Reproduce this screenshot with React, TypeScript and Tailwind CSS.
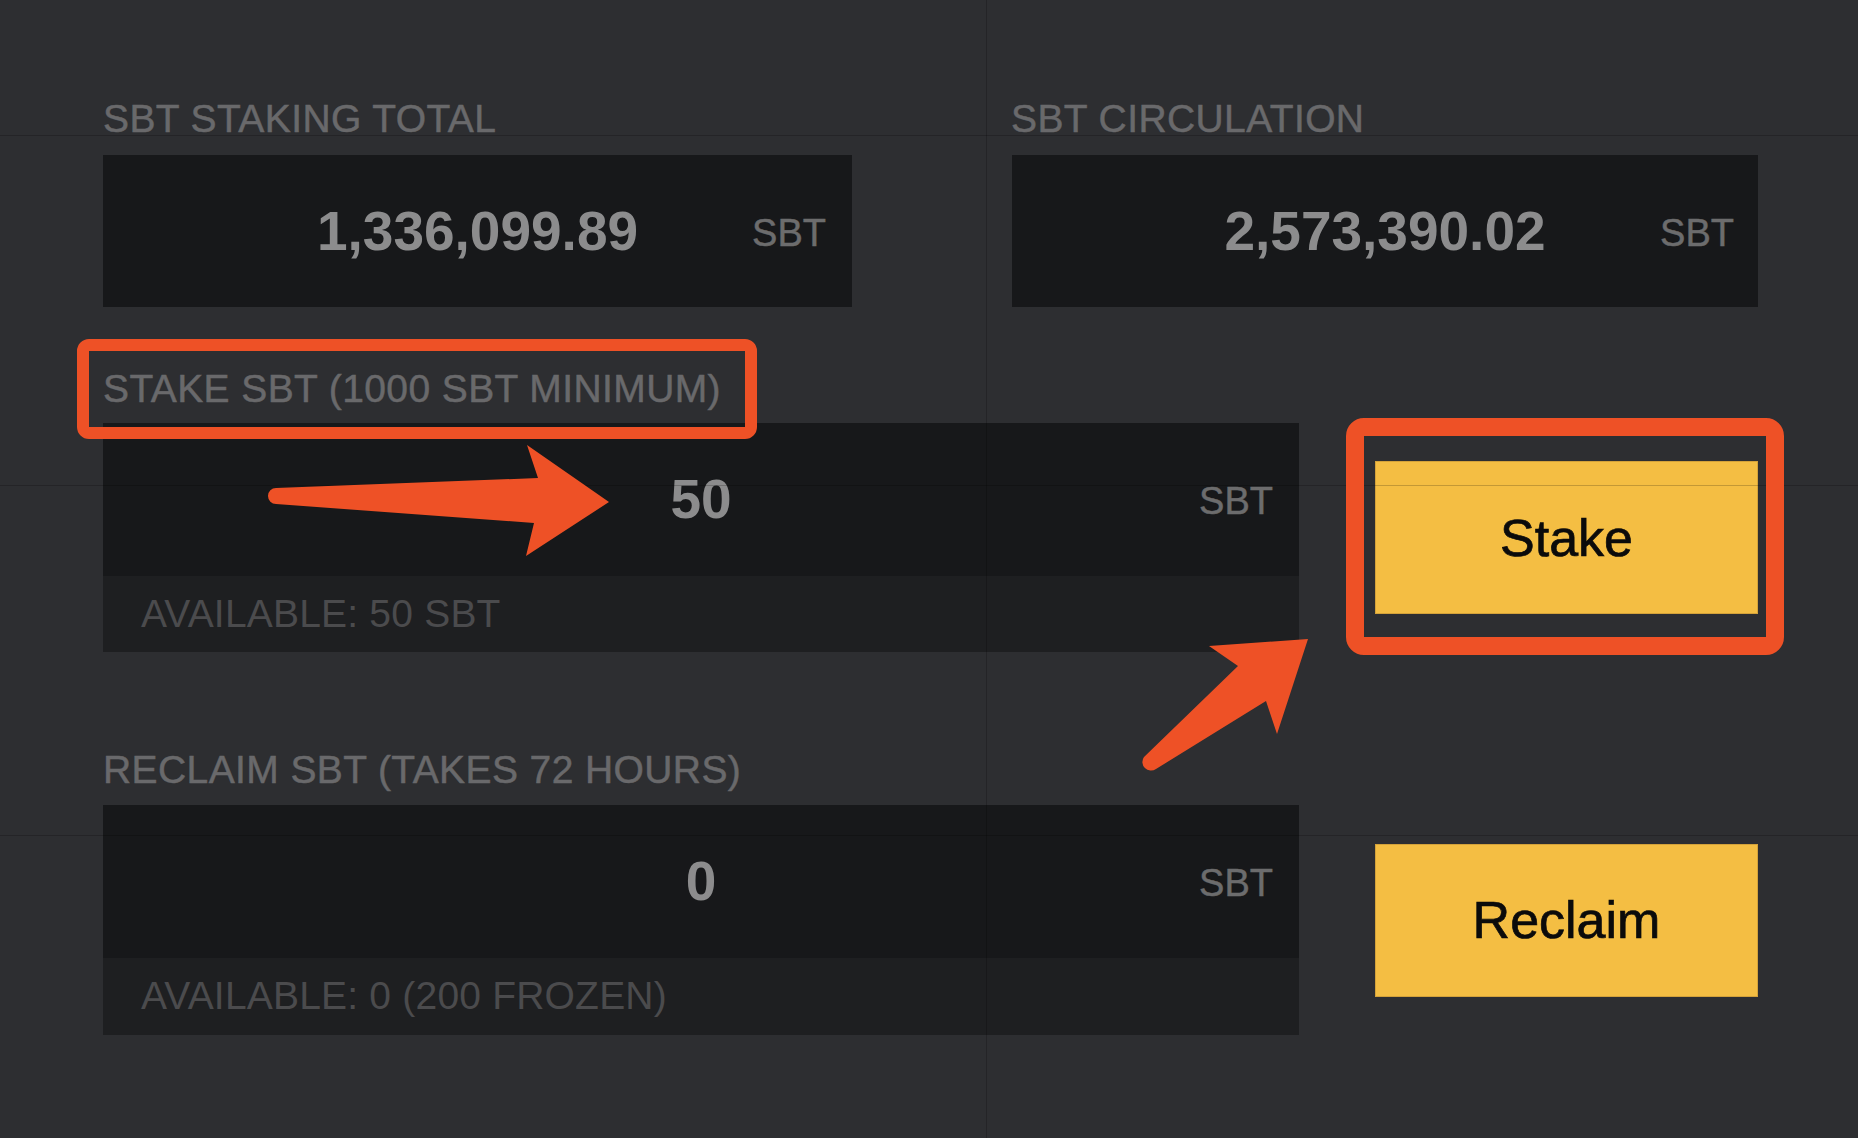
import React from 'react';

const FONT = "font-['Liberation_Sans',Arial,sans-serif]";

const Label: React.FC<{ text: string; className?: string }> = ({ text, className = '' }) => (
  <div
    className={`h-[39px] text-[39px] leading-[39px] tracking-[0.4px] text-[#69696b] whitespace-nowrap [-webkit-text-stroke:0.5px_currentColor] ${className}`}
  >
    {text}
  </div>
);

const AmountRow: React.FC<{ value: string; height: string; unitPad: string }> = ({ value, height, unitPad }) => (
  <div className={`grid grid-cols-[1fr_auto_1fr] items-center bg-[#17181a] ${height}`}>
    <div />
    <span className="text-[55px] font-bold text-[#8c8c8d]">{value}</span>
    <span
      className={`justify-self-end pt-[4px] text-[38px] text-[#6c6c6d] [-webkit-text-stroke:0.5px_currentColor] ${unitPad}`}
    >
      SBT
    </span>
  </div>
);

const ActionButton: React.FC<{ text: string }> = ({ text }) => (
  <button className="ml-[76px] flex h-[153px] w-[383px] items-center justify-center border border-[#d4a23a] bg-[#f4be43] text-[52px] text-[#0b0b0b] [-webkit-text-stroke:0.7px_currentColor]">
    {text}
  </button>
);

const InputSection: React.FC<{
  label: string;
  value: string;
  available: string;
  gap: string;
  subHeight: string;
  button: string;
  className?: string;
}> = ({ label, value, available, gap, subHeight, button, className = '' }) => (
  <div className={className}>
    <Label text={label} className={gap} />
    <div className="flex items-center">
      <div className="w-[1196px]">
        <AmountRow value={value} height="h-[153px]" unitPad="pr-[26px]" />
        <div className={`flex items-center bg-[#1e1f21] pl-[38px] ${subHeight}`}>
          <span className="text-[39px] tracking-[0.2px] text-[#4b4b4d]">{available}</span>
        </div>
      </div>
      <ActionButton text={button} />
    </div>
  </div>
);

const App: React.FC = () => {
  return (
    <div className={`relative h-[1138px] w-full overflow-hidden bg-[#2d2e31] ${FONT}`}>
      <div className="pl-[103px] pt-[99px]">
        <div className="flex">
          <div className="w-[749px]">
            <Label text="SBT STAKING TOTAL" className="mb-[17px]" />
            <AmountRow value="1,336,099.89" height="h-[152px]" unitPad="pr-[26px]" />
          </div>
          <div className="ml-[160px] w-[746px]">
            <Label text="SBT CIRCULATION" className="mb-[17px] -ml-px" />
            <AmountRow value="2,573,390.02" height="h-[152px]" unitPad="pr-[24px]" />
          </div>
        </div>

        <InputSection
          className="mt-[62px]"
          label="STAKE SBT (1000 SBT MINIMUM)"
          value="50"
          available="AVAILABLE: 50 SBT"
          gap="mb-[15px]"
          subHeight="h-[76px]"
          button="Stake"
        />

        <InputSection
          className="mt-[98px]"
          label="RECLAIM SBT (TAKES 72 HOURS)"
          value="0"
          available="AVAILABLE: 0 (200 FROZEN)"
          gap="mb-[16px]"
          subHeight="h-[77px]"
          button="Reclaim"
        />
      </div>

      {/* faint guide lines over the page */}
      <div className="pointer-events-none absolute left-0 right-0 top-[135px] h-px bg-black/20" />
      <div className="pointer-events-none absolute left-0 right-0 top-[485px] h-px bg-black/20" />
      <div className="pointer-events-none absolute left-0 right-0 top-[835px] h-px bg-black/20" />
      <div className="pointer-events-none absolute bottom-0 left-[986px] top-0 w-px bg-black/20" />

      {/* annotation boxes */}
      <div className="pointer-events-none absolute left-[77px] top-[339px] h-[100px] w-[680px] rounded-[12px] border-[12px] border-[#ee5126]" />
      <div className="pointer-events-none absolute left-[1346px] top-[418px] h-[237px] w-[438px] rounded-[18px] border-[18px] border-[#ee5126]" />

      {/* annotation arrows */}
      <svg
        className="pointer-events-none absolute left-0 top-0"
        width={1858}
        height={1138}
        viewBox="0 0 1858 1138"
      >
        <path
          d="M538 478 L527 445 L609 502 L526 556 L534 523 L276 504 A8 8 0 0 1 276 488 Z"
          fill="#ee5126"
        />
        <path
          d="M1308 639 L1277 734 L1266 701 L1156 769 A8.6 8.6 0 0 1 1144 757 L1238 666 L1209 646 Z"
          fill="#ee5126"
        />
      </svg>
    </div>
  );
};

export default App;
